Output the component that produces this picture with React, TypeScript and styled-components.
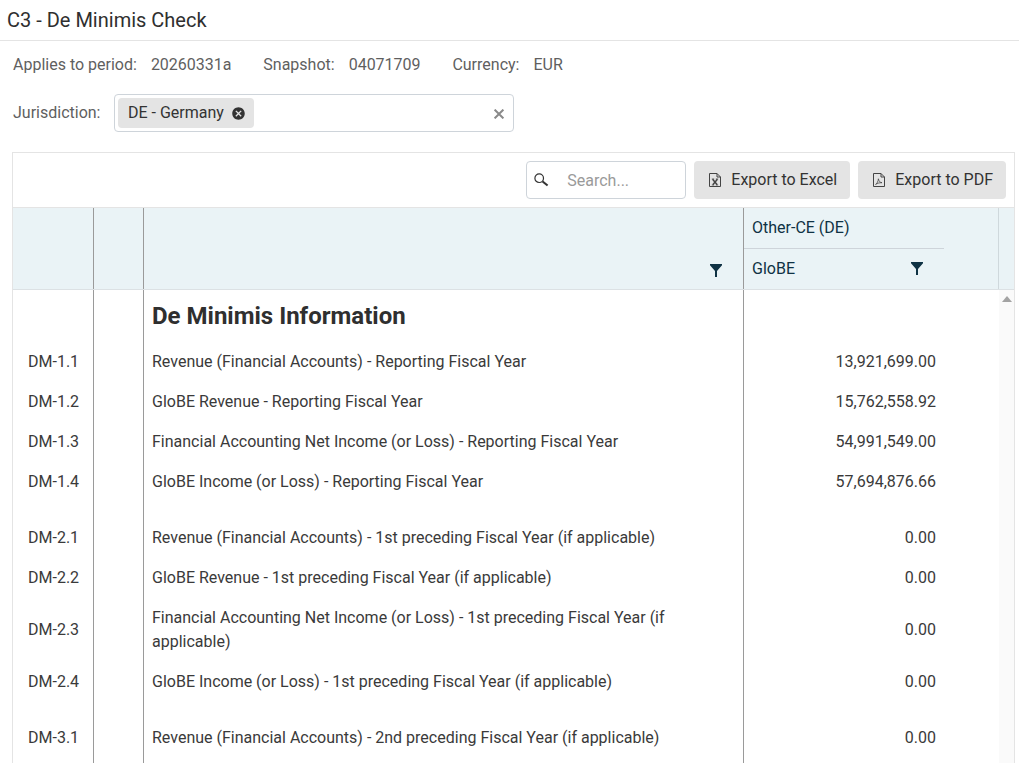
import React from 'react';
import styled, { createGlobalStyle } from 'styled-components';
import { MdCancel } from 'react-icons/md';

const GlobalStyle = createGlobalStyle`
  html, body {
    margin: 0;
    padding: 0;
    background: #fff;
    height: 100%;
    overflow: hidden;
  }
  body {
    font-family: Roboto, "Liberation Sans", sans-serif;
    font-size: 16px;
    color: #333;
  }
`;

const Page = styled.div`
  height: 763px;
  overflow: hidden;
  display: flex;
  flex-direction: column;
`;

const TitleBar = styled.h1`
  margin: 0;
  height: 39px;
  padding: 0 0 1px 7px;
  display: flex;
  align-items: center;
  font-size: 20px;
  font-weight: 400;
  color: #2f2f2f;
  border-bottom: 1px solid #e4e4e4;
  flex: none;
`;

const MetaRow = styled.div`
  display: flex;
  align-items: center;
  height: 46px;
  padding-left: 13px;
  color: #5f5f5f;
  flex: none;
`;

const MetaItem = styled.span`
  margin-right: 31.8px;
  display: flex;
  gap: 14px;
`;

const FilterRow = styled.div`
  display: flex;
  align-items: center;
  height: 38px;
  margin-top: 7px;
  padding-left: 13px;
  color: #5f5f5f;
  flex: none;
`;

const FilterLabel = styled.span`
  width: 101px;
  padding-bottom: 2px;
`;

const MultiSelect = styled.div`
  width: 400px;
  height: 38px;
  box-sizing: border-box;
  border: 1px solid #ced4da;
  border-radius: 4px;
  display: flex;
  align-items: center;
  justify-content: space-between;
  padding: 0 9px 0 3px;
`;

const Chip = styled.span`
  height: 30px;
  box-sizing: border-box;
  padding: 0 8px 1px 10px;
  border-radius: 4px;
  background: #e4e4e4;
  color: #333;
  display: flex;
  align-items: center;
  gap: 7px;
`;

const ChipIcon = styled(MdCancel)`
  color: #333;
  font-size: 15px;
  margin-top: 1px;
`;

const ClearIcon = styled.svg`
  margin-top: 2px;
`;

const Panel = styled.section`
  margin: 20px 4px 0 12px;
  border: 1px solid #e4e4e4;
  border-bottom: 0;
  flex: 1;
  min-height: 0;
  display: flex;
  flex-direction: column;
`;

const Toolbar = styled.div`
  height: 54px;
  flex: none;
  display: flex;
  align-items: center;
  justify-content: flex-end;
  gap: 8px;
  padding-right: 8px;
`;

const SearchBox = styled.div`
  width: 160px;
  height: 38px;
  box-sizing: border-box;
  border: 1px solid #ced4da;
  border-radius: 4px;
  display: flex;
  align-items: center;
  padding-left: 7px;
  color: #333;
`;

const SearchPlaceholder = styled.span`
  margin-left: 18px;
  color: #9a9a9a;
`;

const ExportButton = styled.button`
  height: 38px;
  border: 0;
  border-radius: 4px;
  background: #e4e4e4;
  color: #333;
  font: inherit;
  padding: 0 13px 0 15px;
  display: flex;
  align-items: center;
  gap: 10px;
`;

const ButtonLabel = styled.span`
  padding-bottom: 2px;
`;

const HeaderGrid = styled.div`
  flex: none;
  height: 81px;
  background: #eaf3f6;
  border-top: 1px solid #e4e4e4;
  border-bottom: 1px solid #dce1e4;
  display: grid;
  grid-template-columns: 81px 50px 600px 255px 1fr;
  color: #0f3244;
`;

const HeaderCell = styled.div<{ $divider?: boolean }>`
  border-right: 1px solid ${p => (p.$divider ? '#9a9a9a' : 'transparent')};
  position: relative;
  min-width: 0;
`;

const GroupCell = styled.div`
  border-right: 1px solid #cfd8dc;
  display: flex;
  flex-direction: column;
`;

const GroupTitle = styled.div`
  width: 200px;
  height: 41px;
  box-sizing: border-box;
  padding: 0 0 1px 8px;
  display: flex;
  align-items: center;
  border-bottom: 1px solid #ced4da;
`;

const SubTitle = styled.div`
  width: 200px;
  height: 39px;
  box-sizing: border-box;
  padding: 0 21px 1px 8px;
  display: flex;
  align-items: center;
  justify-content: space-between;
`;

const FilterAtCorner = styled.span`
  position: absolute;
  right: 21px;
  bottom: 12px;
  display: flex;
`;

const Body = styled.div`
  flex: 1;
  min-height: 0;
  display: flex;
  overflow: hidden;
`;

const Rows = styled.div`
  width: 986px;
  flex: none;
`;

const Scrollbar = styled.div`
  flex: 1;
  background: #fafafa;
  display: flex;
  justify-content: center;
  align-items: flex-start;
  padding-top: 6px;
`;

const ScrollArrow = styled.span`
  width: 0;
  height: 0;
  border-left: 5px solid transparent;
  border-right: 5px solid transparent;
  border-bottom: 6px solid #a3a3a3;
`;

const Row = styled.div<{ $height: number }>`
  display: grid;
  grid-template-columns: 81px 50px 600px 200px;
  min-height: ${p => p.$height}px;
`;

const CodeCell = styled.div`
  border-right: 1px solid #9a9a9a;
  display: flex;
  align-items: center;
  padding-left: 15px;
  color: #3a3a3a;
`;

const EmptyCell = styled.div`
  border-right: 1px solid #9a9a9a;
`;

const LabelCell = styled.div`
  border-right: 1px solid #9a9a9a;
  display: flex;
  align-items: center;
  padding: 1px 70px 0 8px;
  line-height: 24px;
  color: #3a3a3a;
`;

const SectionHeading = styled.div`
  border-right: 1px solid #9a9a9a;
  padding: 11px 8px 0;
  font-size: 24px;
  font-weight: 700;
  line-height: 30px;
  color: #2f2f2f;
`;

const ValueCell = styled.div`
  display: flex;
  align-items: center;
  justify-content: flex-end;
  padding-right: 8px;
  color: #3a3a3a;
`;

const FunnelIcon: React.FC = () => (
  <svg width="12" height="13" viewBox="0 0 12 13" fill="#0f3244">
    <path d="M0 0h12v1.2L7 7v6H5V7L0 1.2z" />
  </svg>
);

const SearchIcon: React.FC = () => (
  <svg width="15" height="14" viewBox="0 0 15 14" fill="none" stroke="#333">
    <circle cx="5.2" cy="5.2" r="4.3" strokeWidth="1.2" />
    <path d="M8.6 8.4l5 4.2" strokeWidth="2" />
  </svg>
);

const CloseIcon: React.FC = () => (
  <ClearIcon width="10" height="10" viewBox="0 0 10 10" fill="none" stroke="#8a8a8a" strokeWidth="2">
    <path d="M.6 .6l8.8 8.8M9.4 .6l-8.8 8.8" />
  </ClearIcon>
);

const ExcelIcon: React.FC = () => (
  <svg width="12" height="14" viewBox="0 0 12 14" fill="none" stroke="#444">
    <path d="M.5 .5h7.5l3.5 3.5v9.5h-11z M8 .5v3.5h3.5" strokeWidth="1" />
    <path d="M3.6 6.2l4.6 5.6M8.4 6.2l-4.6 5.6" strokeWidth="1.5" />
    <path d="M2.8 6h2.4M6.8 6h2.4M2.8 12h2.4M6.8 12h2.4" strokeWidth=".8" />
  </svg>
);

const PdfIcon: React.FC = () => (
  <svg width="12" height="14" viewBox="0 0 12 14" fill="none" stroke="#444">
    <path d="M.5 .5h7.5l3.5 3.5v9.5h-11z M8 .5v3.5h3.5" strokeWidth="1" />
    <path d="M2.6 11.4c1.5-1 2.6-3 2.8-5.6.5 2.4 1.5 3.6 3.6 3.9-2.2-.1-4.4.4-6.4 1.7z" strokeWidth=".8" />
  </svg>
);

type Item = { code: string; label: string; value: string; height?: number };

const group1: Item[] = [
  { code: 'DM-1.1', label: 'Revenue (Financial Accounts) - Reporting Fiscal Year', value: '13,921,699.00' },
  { code: 'DM-1.2', label: 'GloBE Revenue - Reporting Fiscal Year', value: '15,762,558.92' },
  { code: 'DM-1.3', label: 'Financial Accounting Net Income (or Loss) - Reporting Fiscal Year', value: '54,991,549.00' },
  { code: 'DM-1.4', label: 'GloBE Income (or Loss) - Reporting Fiscal Year', value: '57,694,876.66' },
];

const group2: Item[] = [
  { code: 'DM-2.1', label: 'Revenue (Financial Accounts) - 1st preceding Fiscal Year (if applicable)', value: '0.00' },
  { code: 'DM-2.2', label: 'GloBE Revenue - 1st preceding Fiscal Year (if applicable)', value: '0.00' },
  { code: 'DM-2.3', label: 'Financial Accounting Net Income (or Loss) - 1st preceding Fiscal Year (if applicable)', value: '0.00', height: 64 },
  { code: 'DM-2.4', label: 'GloBE Income (or Loss) - 1st preceding Fiscal Year (if applicable)', value: '0.00' },
];

const group3: Item[] = [
  { code: 'DM-3.1', label: 'Revenue (Financial Accounts) - 2nd preceding Fiscal Year (if applicable)', value: '0.00' },
];

const Spacer: React.FC<{ height?: number }> = ({ height = 16 }) => (
  <Row $height={height}>
    <EmptyCell />
    <EmptyCell />
    <EmptyCell />
  </Row>
);

const DataRows: React.FC<{ items: Item[] }> = ({ items }) => (
  <>
    {items.map(item => (
      <Row key={item.code} $height={item.height ?? 40}>
        <CodeCell>{item.code}</CodeCell>
        <EmptyCell />
        <LabelCell>{item.label}</LabelCell>
        <ValueCell>{item.value}</ValueCell>
      </Row>
    ))}
  </>
);

const App: React.FC = () => (
  <Page>
    <GlobalStyle />
    <TitleBar>C3 - De Minimis Check</TitleBar>
    <MetaRow>
      <MetaItem><span>Applies to period:</span><span>20260331a</span></MetaItem>
      <MetaItem><span>Snapshot:</span><span>04071709</span></MetaItem>
      <MetaItem><span>Currency:</span><span>EUR</span></MetaItem>
    </MetaRow>
    <FilterRow>
      <FilterLabel>Jurisdiction:</FilterLabel>
      <MultiSelect>
        <Chip>DE - Germany <ChipIcon /></Chip>
        <CloseIcon />
      </MultiSelect>
    </FilterRow>
    <Panel>
      <Toolbar>
        <SearchBox>
          <SearchIcon />
          <SearchPlaceholder>Search...</SearchPlaceholder>
        </SearchBox>
        <ExportButton><ExcelIcon /><ButtonLabel>Export to Excel</ButtonLabel></ExportButton>
        <ExportButton><PdfIcon /><ButtonLabel>Export to PDF</ButtonLabel></ExportButton>
      </Toolbar>
      <HeaderGrid>
        <HeaderCell $divider />
        <HeaderCell $divider />
        <HeaderCell $divider>
          <FilterAtCorner><FunnelIcon /></FilterAtCorner>
        </HeaderCell>
        <GroupCell>
          <GroupTitle>Other-CE (DE)</GroupTitle>
          <SubTitle>GloBE <FunnelIcon /></SubTitle>
        </GroupCell>
        <HeaderCell />
      </HeaderGrid>
      <Body>
        <Rows>
          <Row $height={51}>
            <EmptyCell />
            <EmptyCell />
            <SectionHeading>De Minimis Information</SectionHeading>
          </Row>
          <DataRows items={group1} />
          <Spacer />
          <DataRows items={group2} />
          <Spacer />
          <DataRows items={group3} />
          <Spacer height={40} />
        </Rows>
        <Scrollbar><ScrollArrow /></Scrollbar>
      </Body>
    </Panel>
  </Page>
);

export default App;
